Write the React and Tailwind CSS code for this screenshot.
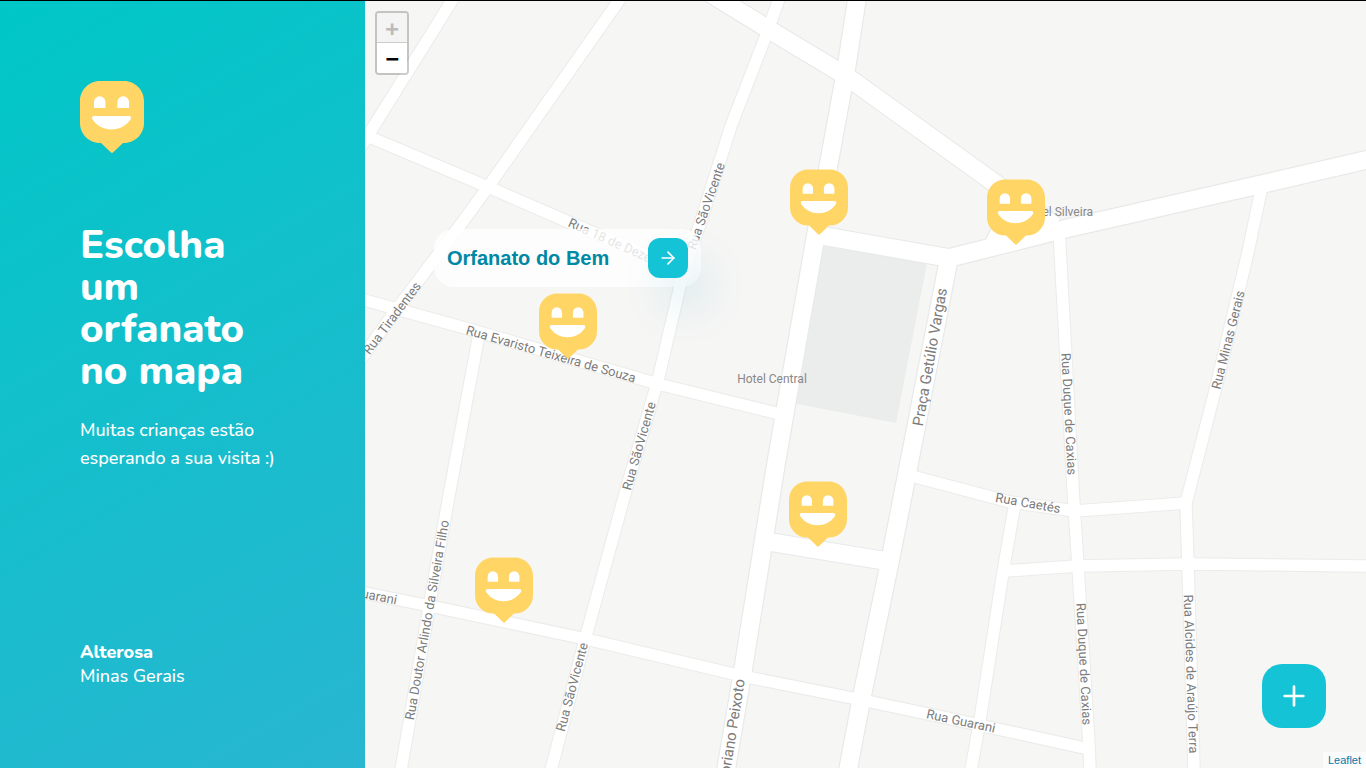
import { ArrowRight, Plus } from 'lucide-react';

const MINOR_ROADS = [
  '453,-1 367,137 350,164',
  '367,136 488,187 587,230 692,274',
  '620,-1 488,187 464,220 397,309 350,374',
  '779,-1 765,38 731,126 706,205 681,282 658,380 626,490 586,636 551,770',
  '350,296 400,310 465,328 658,384 780,414',
  '479,334 450,490 430,602 401,770',
  '350,590 430,606 586,639 742,676 862,700 961,721 1089,749',
  '1059,230 1074,505 1078,566 1089,745 1090,770',
  '1262,186 1248,252 1216,387 1186,503 1188,565 1194,770',
  '908,475 1010,502 1075,511 1186,503',
  '1004,571 1078,566 1188,564 1370,566',
  '1015,503 1003,572 980,720 971,770',
];

const MAJOR_ROADS = [
  '857,-1 846,70 828,168 815,240 786,406 775,470 743,670 726,770',
  '700,-13 773,32 846,76 996,184 1055,226',
  '1012,205 994,244',
  '818,235 949,258 1060,230 1258,185 1370,159',
  '949,258 907,474 890,561 862,696 848,770',
  '764,541 886,561',
];

const STREET_LABELS = [
  { text: 'Rua Evaristo Teixeira de Souza', x: 551, y: 354, angle: 16 },
  { text: 'Rua SãoVicente', x: 706, y: 206, angle: -71 },
  { text: 'Rua SãoVicente', x: 639, y: 446, angle: -74 },
  { text: 'Rua SãoVicente', x: 572, y: 687, angle: -75 },
  { text: 'Rua Tiradentes', x: 392, y: 318, angle: -53 },
  { text: 'Rua Doutor Arlindo da Silveira Filho', x: 427, y: 620, angle: -80 },
  { text: 'Rua Duque de Caxias', x: 1069, y: 414, angle: 87 },
  { text: 'Rua Duque de Caxias', x: 1084, y: 664, angle: 87 },
  { text: 'Rua Alcides de Araújo Terra', x: 1191, y: 674, angle: 88 },
  { text: 'Rua Minas Gerais', x: 1228, y: 340, angle: -76 },
  { text: 'Rua Caetés', x: 1028, y: 503, angle: 10 },
  { text: 'Rua Guarani', x: 961, y: 721, angle: 12 },
  { text: 'Rua Guarani', x: 397, y: 600, angle: 11, anchor: 'end' },
  { text: 'Rua 18 de Dezembro', x: 569, y: 222, angle: 24, anchor: 'start' },
  { text: 'Praça Getúlio Vargas', x: 930, y: 357, angle: -80, size: 15 },
  { text: 'Rua Floriano Peixoto', x: 740, y: 679, angle: -81, anchor: 'end', size: 15 },
];

const PINS = [
  { name: 'Orfanato da Praça', place: 'left-[425px] top-[168px]' },
  { name: 'Orfanato Silveira', place: 'left-[622px] top-[178px]' },
  { name: 'Orfanato do Bem', place: 'left-[174px] top-[292px]' },
  { name: 'Orfanato Peixoto', place: 'left-[424px] top-[480px]' },
  { name: 'Orfanato Guarani', place: 'left-[110px] top-[556px]' },
];

function HappyFace({ className }) {
  return (
    <svg viewBox="0 0 64 72" className={className} aria-hidden="true">
      <path
        fill="#ffd666"
        d="M20 0H44C55 0 64 9 64 20V42C64 53 55 62 44 62H43L33 71.6Q32 72.4 31 71.6L21 62H20C9 62 0 53 0 42V20C0 9 9 0 20 0Z"
      />
      <path
        fill="#fff"
        d="M14 27V21A5.7 5.7 0 0 1 25.4 21V27ZM37.4 27V21A5.7 5.7 0 0 1 49 21V27ZM14 35H49C51 35 51.6 37 50.5 38.5C46 45 39 48.4 31.5 48.4S17 45 12.5 38.5C11.4 37 12 35 14 35Z"
      />
    </svg>
  );
}

function Roads({ lines, casing, width }) {
  return (
    <>
      {lines.map((points) => (
        <polyline key={points} points={points} stroke={casing} strokeWidth={width} />
      ))}
    </>
  );
}

function StreetMap() {
  return (
    <svg
      className="absolute inset-0 size-full"
      viewBox="365 1 1001 767"
      preserveAspectRatio="xMinYMin slice"
      aria-hidden="true"
    >
      <rect x="365" y="0" width="1001" height="768" fill="#f6f6f5" />
      <polygon points="820,240 928,258 896,423 792,403" fill="#ebedec" />
      <g fill="none" strokeLinejoin="round">
        <Roads lines={MINOR_ROADS} casing="#ececeb" width={13.6} />
        <Roads lines={MAJOR_ROADS} casing="#e7eae9" width={20} />
        <Roads lines={MINOR_ROADS} casing="#ffffff" width={11.4} />
        <Roads lines={MAJOR_ROADS} casing="#ffffff" width={17.6} />
      </g>
      <g fill="#7c7c7c" fontFamily="Roboto, sans-serif">
        {STREET_LABELS.map(({ text, x, y, angle, anchor = 'middle', size = 13 }) => (
          <text
            key={`${text}-${x}`}
            transform={`translate(${x} ${y}) rotate(${angle})`}
            textAnchor={anchor}
            dominantBaseline="central"
            fontSize={size}
          >
            {text}
          </text>
        ))}
        <g fill="#888888" fontSize="12">
          <text x="772" y="383" textAnchor="middle">Hotel Central</text>
          <text x="1093" y="216" textAnchor="end">Hotel Silveira</text>
        </g>
      </g>
    </svg>
  );
}

function ZoomControl() {
  return (
    <div className="absolute left-2.5 top-2.5 flex flex-col overflow-hidden rounded border-2 border-black/20 bg-clip-padding font-['DejaVu_Sans_Mono',monospace] text-[22px] font-bold leading-[30px]">
      <button
        type="button"
        disabled
        aria-label="Zoom in"
        className="flex size-[30px] items-center justify-center border-b border-[#cccccc] bg-[#f4f4f4] pt-0.5 text-[#bbbbbb]"
      >
        +
      </button>
      <button
        type="button"
        aria-label="Zoom out"
        className="flex size-[30px] items-center justify-center bg-white pt-0.5 text-black"
      >
        −
      </button>
    </div>
  );
}

export default function App() {
  return (
    <div className="flex min-h-screen border-t border-black">
      <aside className="flex w-[365px] shrink-0 flex-col justify-between bg-[linear-gradient(329.54deg,#29b6d1_0%,#00c7c7_100%)] p-20 font-['Nunito','Lato',sans-serif] text-lg font-medium text-white">
        <header>
          <HappyFace className="h-[72px] w-16" />
          <h2 className="mt-[71px] text-[40px] font-extrabold leading-[42px]">
            <span className="block">Escolha</span>
            <span className="block">um</span>
            <span className="block">orfanato</span>
            <span className="block">no mapa</span>
          </h2>
          <p className="mt-6 leading-7">Muitas crianças estão esperando a sua visita :)</p>
        </header>
        <footer className="flex flex-col leading-6">
          <strong className="font-extrabold">Alterosa</strong>
          <span>Minas Gerais</span>
        </footer>
      </aside>

      <main className="relative flex-1 overflow-hidden bg-[#f6f6f5]">
        <StreetMap />

        {PINS.map(({ name, place }) => (
          <button key={place} type="button" aria-label={name} className={`absolute ${place}`}>
            <HappyFace className="h-[66px] w-[58px]" />
          </button>
        ))}

        <div className="absolute left-[69px] top-[228px] flex w-[267px] items-center justify-between rounded-[20px] bg-white/80 py-[9px] pl-[13px] pr-[13px]">
          <span className="font-['Liberation_Sans',sans-serif] text-xl font-bold text-[#0089a5]">
            Orfanato do Bem
          </span>
          <a
            href="#orfanato"
            aria-label="Ver orfanato"
            className="flex size-10 items-center justify-center rounded-xl bg-[#15c3d6] text-white shadow-[17px_27px_45px_rgba(23,142,166,0.16)]"
          >
            <ArrowRight size={20} />
          </a>
        </div>

        <ZoomControl />

        <a
          href="#novo"
          aria-label="Cadastrar orfanato"
          className="absolute bottom-10 right-10 flex size-16 items-center justify-center rounded-[20px] bg-[#15c3d6] text-white"
        >
          <Plus size={32} />
        </a>

        <div className="absolute bottom-0 right-0 bg-white/70 px-[5px] font-['Liberation_Sans',sans-serif] text-[11px] leading-4">
          <a href="#leaflet" className="text-[#0078a8]">Leaflet</a>
        </div>
      </main>
    </div>
  );
}
